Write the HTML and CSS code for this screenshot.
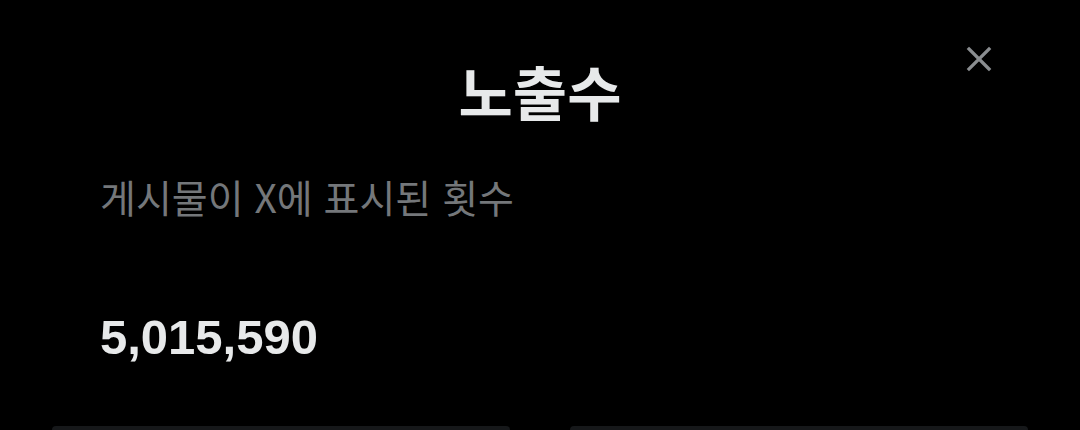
FILE: index.html
```html
<!DOCTYPE html>
<html lang="ko">
<head>
<meta charset="utf-8">
<link rel="stylesheet" href="styles.css">
</head>
<body>
<div class="sheet">
  <header class="head">
    <h1 class="title">노출수</h1>
    <button class="close" aria-label="닫기">
      <svg viewBox="0 0 24 24" width="30" height="30"><path d="M4 4 L20 20 M20 4 L4 20" stroke="#8a8d90" stroke-width="2.6" stroke-linecap="square" fill="none"/></svg>
    </button>
  </header>
  <p class="desc">게시물이 X에 표시된 횟수</p>
  <div class="value">5,015,590</div>
  <div class="cards">
    <div class="card"></div>
    <div class="card"></div>
  </div>
</div>
</body>
</html>
```
FILE: styles.css
```css
html, body {
  margin: 0;
  padding: 0;
  background: #000;
  height: 100%;
  overflow: hidden;
}
.sheet {
  width: 1080px;
  height: 430px;
  display: flex;
  flex-direction: column;
  font-family: "Noto Sans CJK KR", "Noto Sans", sans-serif;
}
.head {
  position: relative;
  display: flex;
  justify-content: center;
  padding-top: 51px;
  height: 80px;
}
.title {
  margin: 0;
  font-size: 59px;
  line-height: 84px;
  font-weight: 700;
  color: #e7e9ea;
  height: 80px;
  display: flex;
  align-items: center;
}
.close {
  position: absolute;
  right: 86px;
  top: 44px;
  width: 30px;
  height: 30px;
  padding: 0;
  border: 0;
  background: transparent;
}
.close svg { display: block; }
.desc {
  margin: 40px 0 0 100px;
  font-size: 39px;
  line-height: 50px;
  color: #74777a;
  font-weight: 400;
}
.value {
  margin: 88px 0 0 100px;
  font-family: "Liberation Sans", Arial, sans-serif;
  font-weight: 700;
  font-size: 49px;
  line-height: 56px;
  color: #e7e9ea;
}
.cards {
  margin-top: auto;
  display: flex;
  gap: 60px;
  padding: 0 52px;
  height: 4px;
}
.card {
  flex: 1;
  background: #16181a;
  border-radius: 12px 12px 0 0;
}
```
